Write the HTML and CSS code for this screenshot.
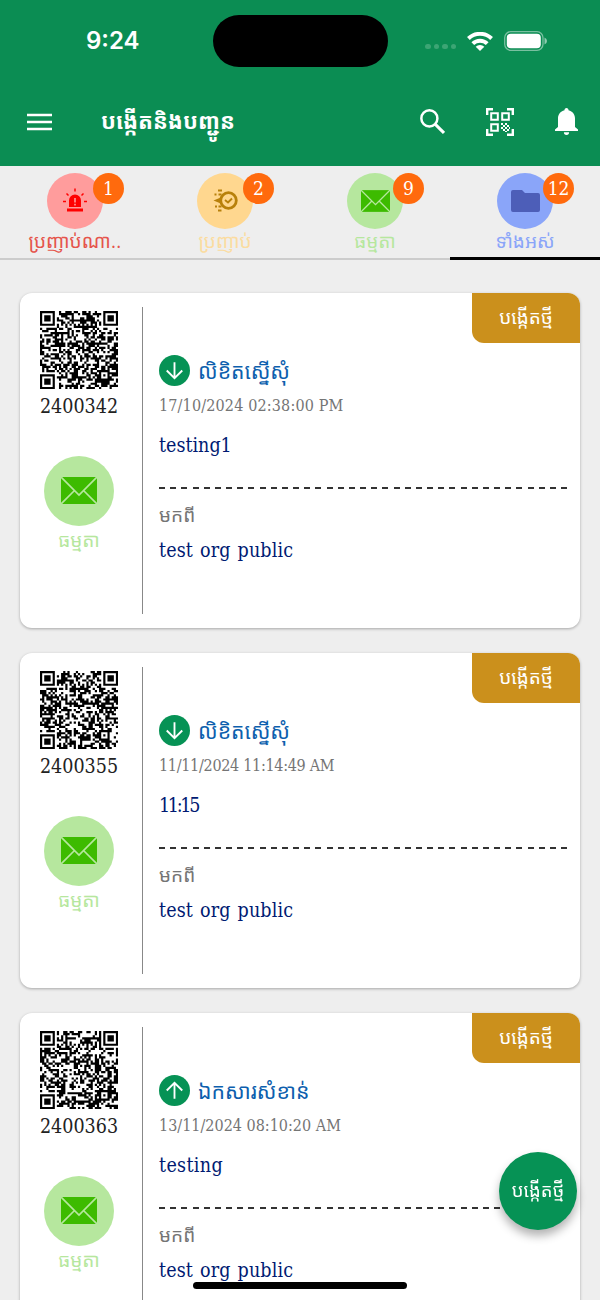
FILE: index.html
```html
<!DOCTYPE html>
<html lang="km">
<head>
    <meta charset="UTF-8">
    <meta name="viewport" content="width=device-width, initial-scale=1.0">
    <title>បង្កើតនិងបញ្ជូន</title>
    <link rel="stylesheet" href="styles.css">
</head>
<body>
    <svg class="sprite">
        <symbol id="mail" viewBox="0 0 36 27">
            <path fill="#3dbb00" d="M0 0h36v27H0z"/>
            <path fill="none" stroke="#b6e79e" stroke-width="1.7" d="M0 0l18 18L36 0M0 27l13.5-13.5M36 27L22.5 13.5"/>
        </symbol>
        <symbol id="down" viewBox="0 0 30 30">
            <circle cx="15" cy="15" r="15" fill="#069255"/>
            <path fill="none" stroke="#fff" stroke-width="1.8" d="M15 7v15M7.5 15l7.5 7.5 7.5-7.5"/>
        </symbol>
        <symbol id="up" viewBox="0 0 30 30">
            <circle cx="15" cy="15" r="15" fill="#069255"/>
            <path fill="none" stroke="#fff" stroke-width="1.8" d="M15 23V8M7.5 15L15 7.5l7.5 7.5"/>
        </symbol>
    </svg>

    <header class="header">
        <div class="status-bar">
            <div class="time">9:24</div>
            <div class="island"></div>
            <div class="status-icons">
                <div class="dots"><i></i><i></i><i></i><i></i></div>
                <svg class="wifi" viewBox="0 0 26 19">
                    <g fill="none" stroke="#fff" stroke-width="3.9">
                        <path d="M1.4 6.5a16.6 16.6 0 0 1 23.2 0"/>
                        <path d="M5.8 11.7a10.2 10.2 0 0 1 14.4 0"/>
                    </g>
                    <path fill="#fff" d="M13 19l-4.3-4.2a6.2 6.2 0 0 1 8.6 0z"/>
                </svg>
                <svg class="battery" viewBox="0 0 43 20">
                    <rect x=".7" y=".7" width="38.3" height="18.6" rx="6" fill="none" stroke="#fff" stroke-opacity=".45" stroke-width="1.3"/>
                    <rect x="2.8" y="2.8" width="34" height="14.4" rx="4" fill="#fff"/>
                    <path d="M40.5 6.5q2.5 1 2.5 3.5t-2.5 3.5z" fill="#fff" fill-opacity=".55"/>
                </svg>
            </div>
        </div>
        <div class="app-bar">
            <svg class="menu" viewBox="0 0 25 18"><path stroke="#fff" stroke-width="2.6" d="M0 2h25M0 9h25M0 16h25"/></svg>
            <h1 class="title">បង្កើតនិងបញ្ជូន</h1>
            <svg class="search" viewBox="0 0 24 24" fill="none" stroke="#fff">
                <circle cx="9" cy="9" r="7.7" stroke-width="2.4"/>
                <path d="M14.5 14.5l8.5 8.5" stroke-width="2.9"/>
            </svg>
            <svg class="scan" viewBox="0 0 28 28">
                <g fill="none" stroke="#fff" stroke-width="2.4">
                    <path d="M1.2 7V1.2H7M21 1.2h5.8V7M26.8 21v5.8H21M7 26.8H1.2V21"/>
                    <path stroke-width="2" d="M5.2 5.2h6.6v6.6H5.2zM16.2 5.2h6.6v6.6h-6.6zM5.2 16.2h6.6v6.6H5.2z"/>
                </g>
                <path fill="#fff" d="M15 15h2v2h-2zM19 15h2v2h-2zM17 17h2v2h-2zM21 17h2v2h-2zM15 19h2v2h-2zM19 19h2v2h-2zM17 21h2v2h-2zM21 21h2v2h-2zM19 23h2v1h-2zM23 19h1v2h-1z"/>
            </svg>
            <svg class="bell" viewBox="0 0 23 27">
                <path fill="#fff" d="M11.5 0c1.3 0 2 1 2 2.2 4.2 1 6.5 4.3 6.5 8.3V19l3 2.6V23H0v-1.4L3 19v-8.5c0-4 2.3-7.3 6.5-8.3 0-1.2.7-2.2 2-2.2zM8.9 24.3h5.2a2.6 2.6 0 0 1-5.2 0z"/>
            </svg>
        </div>
    </header>

    <nav class="tabs">
        <div class="tab urgent">
            <div class="tab-icon">
                <svg width="26" height="26" viewBox="0 0 26 26">
                    <path fill="#f00" d="M7 19v-6.5a6 6 0 0 1 12 0V19zM5 20.5h16v3H5z"/>
                    <path fill="none" stroke="#f00" stroke-width="1.5" d="M1 13.5h3M22 13.5h3M4.5 5.5l2 2M21.5 5.5l-2 2M13 .5v3"/>
                    <path stroke="#ff9c9c" stroke-width="1.6" d="M13 10v4.5M13 15.8v1.6"/>
                </svg>
                <span class="count">1</span>
            </div>
            <div class="tab-label">ប្រញាប់ណា..</div>
        </div>
        <div class="tab fast">
            <div class="tab-icon">
                <svg width="26" height="26" viewBox="0 0 26 26">
                    <circle cx="16.5" cy="12.5" r="7.8" fill="none" stroke="#b8800a" stroke-width="2.8"/>
                    <path fill="none" stroke="#b8800a" stroke-width="1.9" d="M13 12l3 2.5 4-4M6 2.5h4M2.5 6.5h2M6.5 6.5h3M3 18.5h2M6.5 18.5h3M6 22.5h3.5"/>
                    <path fill="#b8800a" d="M1.5 12.5L10 9v7z"/>
                </svg>
                <span class="count">2</span>
            </div>
            <div class="tab-label">ប្រញាប់</div>
        </div>
        <div class="tab normal">
            <div class="tab-icon">
                <svg width="29" height="22"><use href="#mail"/></svg>
                <span class="count">9</span>
            </div>
            <div class="tab-label">ធម្មតា</div>
        </div>
        <div class="tab all active">
            <div class="tab-icon">
                <svg width="29" height="22" viewBox="0 0 29 22">
                    <path fill="#4d5eb8" d="M2 0h9l3 3h13q2 0 2 2v15q0 2-2 2H2q-2 0-2-2V2q0-2 2-2z"/>
                </svg>
                <span class="count">12</span>
            </div>
            <div class="tab-label">ទាំងអស់</div>
        </div>
    </nav>

    <main class="list">
        <article class="card">
            <div class="side">
                <svg class="qr" data-code="2400342" viewBox="0 0 37 37"></svg>
                <div class="number">2400342</div>
                <div class="mail-icon"><svg width="36" height="27"><use href="#mail"/></svg></div>
                <div class="kind">ធម្មតា</div>
            </div>
            <div class="info">
                <div class="doc-type"><svg width="31" height="31"><use href="#down"/></svg><span>លិខិតស្នើសុំ</span></div>
                <div class="date">17/10/2024 02:38:00 PM</div>
                <div class="subject">testing1</div>
                <div class="dashes"></div>
                <div class="from">មកពី</div>
                <div class="org">test org public</div>
            </div>
            <div class="state">បង្កើតថ្មី</div>
        </article>
        <article class="card">
            <div class="side">
                <svg class="qr" data-code="2400355" viewBox="0 0 37 37"></svg>
                <div class="number">2400355</div>
                <div class="mail-icon"><svg width="36" height="27"><use href="#mail"/></svg></div>
                <div class="kind">ធម្មតា</div>
            </div>
            <div class="info">
                <div class="doc-type"><svg width="31" height="31"><use href="#down"/></svg><span>លិខិតស្នើសុំ</span></div>
                <div class="date tight">11/11/2024 11:14:49 AM</div>
                <div class="subject time-subject">11:15</div>
                <div class="dashes"></div>
                <div class="from">មកពី</div>
                <div class="org">test org public</div>
            </div>
            <div class="state">បង្កើតថ្មី</div>
        </article>
        <article class="card">
            <div class="side">
                <svg class="qr" data-code="2400363" viewBox="0 0 37 37"></svg>
                <div class="number">2400363</div>
                <div class="mail-icon"><svg width="36" height="27"><use href="#mail"/></svg></div>
                <div class="kind">ធម្មតា</div>
            </div>
            <div class="info">
                <div class="doc-type"><svg width="31" height="31"><use href="#up"/></svg><span>ឯកសារសំខាន់</span></div>
                <div class="date even">13/11/2024 08:10:20 AM</div>
                <div class="subject wide">testing</div>
                <div class="dashes"></div>
                <div class="from">មកពី</div>
                <div class="org">test org public</div>
            </div>
            <div class="state">បង្កើតថ្មី</div>
        </article>
    </main>

    <button class="fab">បង្កើតថ្មី</button>
    <div class="home-bar"></div>

    <script src="script.js"></script>
</body>
</html>
```
FILE: styles.css
```css
body {
    margin: 0;
    height: 1300px;
    overflow: hidden;
    background: #eeeeee;
    font-family: "Roboto Slab", "DejaVu Serif Condensed", "DejaVu Serif", "Noto Sans Khmer", serif;
    font-stretch: condensed;
}
.sprite {
    display: none;
}
svg {
    display: block;
    flex: none;
}

/* header */
.header {
    height: 166px;
    background: #0b8d53;
    color: #fff;
}
.status-bar {
    display: flex;
    align-items: center;
    height: 75px;
    padding-top: 7px;
    margin-bottom: -8px;
    box-sizing: border-box;
}
.time {
    width: 127px;
    padding-left: 86px;
    font: 600 24px/30px Inter, sans-serif;
    font-stretch: normal;
}
.island {
    width: 175px;
    height: 52px;
    border-radius: 26px;
    background: #000;
}
.status-icons {
    display: flex;
    align-items: center;
    padding-left: 37px;
}
.dots {
    display: flex;
    gap: 3px;
    margin: 11px 11px 0 0;
}
.dots i {
    width: 5.5px;
    height: 5.5px;
    border-radius: 50%;
    background: #3ca574;
}
.wifi {
    width: 26px;
    height: 19px;
    margin-right: 11px;
}
.battery {
    width: 43px;
    height: 20px;
}
.app-bar {
    display: flex;
    align-items: center;
    height: 109px;
    padding: 0 22px 0 27px;
    box-sizing: border-box;
}
.menu {
    width: 25px;
    height: 18px;
    margin-right: 49px;
}
.title {
    flex: 1;
    margin: 0;
    padding-bottom: 2px;
    font-size: 22px;
    font-weight: 700;
    line-height: 40px;
    white-space: nowrap;
}
.search {
    width: 25px;
    height: 25px;
    margin: 0 41px 0 0;
}
.scan {
    width: 28px;
    height: 28px;
    margin-right: 41px;
}
.bell {
    width: 23px;
    height: 27px;
}

/* tabs */
.tabs {
    display: flex;
    height: 94px;
}
.tab {
    flex: 1;
    display: flex;
    flex-direction: column;
    align-items: center;
    box-sizing: border-box;
    padding-top: 7px;
    border-bottom: 2px solid #cccccc;
}
.tab.active {
    border-bottom: 3px solid #000;
}
.tab-icon {
    position: relative;
    display: flex;
    align-items: center;
    justify-content: center;
    width: 56px;
    height: 56px;
    border-radius: 50%;
}
.count {
    position: absolute;
    left: 46px;
    top: 0;
    width: 31px;
    height: 31px;
    border-radius: 50%;
    background: #ff6a0d;
    color: #fff;
    font-size: 19px;
    line-height: 31px;
    text-align: center;
}
.tab-label {
    font-size: 19px;
    line-height: 24px;
    height: 26px;
    white-space: nowrap;
}
.urgent .tab-icon { background: #ff9c9c; }
.urgent .tab-label { color: #e5544b; }
.fast .tab-icon { background: #ffd78f; }
.fast .tab-label { color: #fbdca0; }
.normal .tab-icon { background: #b6e79e; }
.normal .tab-label { color: #b6e79e; }
.all .tab-icon { background: #8aa5f9; }
.all .tab-label { color: #8aa5f9; }

/* cards */
.list {
    display: grid;
    gap: 25px;
    padding: 33px 20px 0;
}
.card {
    position: relative;
    display: flex;
    box-sizing: border-box;
    height: 335px;
    padding: 14px 13px 14px 0;
    border-radius: 12px;
    background: #fff;
    box-shadow: 0 1px 3px rgba(0, 0, 0, .3);
}
.side {
    display: flex;
    flex-direction: column;
    align-items: center;
    box-sizing: border-box;
    width: 123px;
    padding: 4px 4px 0 0;
    border-right: 1.5px solid #888;
}
.qr {
    width: 78px;
    height: 78px;
}
.number {
    margin-top: 4px;
    font-size: 19.5px;
    line-height: 28px;
    color: #222;
}
.mail-icon {
    display: flex;
    align-items: center;
    justify-content: center;
    width: 70px;
    height: 70px;
    margin-top: 34.5px;
    border-radius: 50%;
    background: #b6e79e;
}
.kind {
    font-size: 19px;
    line-height: 28px;
    color: #b6e79e;
}
.info {
    flex: 1;
    padding: 48px 0 0 16px;
    white-space: nowrap;
}
.doc-type {
    display: flex;
    align-items: center;
    gap: 8px;
    height: 31px;
    font-size: 21.2px;
    color: #0d5fae;
}
.date {
    margin-top: 9px;
    font-size: 16px;
    line-height: 22px;
    letter-spacing: .15px;
    color: #757575;
}
.date.tight {
    letter-spacing: -.3px;
}
.date.even {
    letter-spacing: 0;
}
.subject,
.org {
    font-size: 19.5px;
    line-height: 28px;
    color: #001a72;
}
.subject {
    margin-top: 15px;
}
.subject.time-subject {
    letter-spacing: -2.3px;
}
.subject.wide {
    letter-spacing: .35px;
}
.dashes {
    height: 2px;
    margin-top: 27px;
    background: repeating-linear-gradient(90deg, #333 0 6px, transparent 6px 11.17px);
}
.from {
    margin-top: 12px;
    font-size: 19px;
    line-height: 28px;
    color: #757575;
}
.org {
    margin-top: 8px;
    letter-spacing: .15px;
    word-spacing: 1.2px;
}
.state {
    position: absolute;
    top: 0;
    right: 0;
    width: 108px;
    height: 50px;
    border-radius: 0 12px 0 12px;
    background: #cb901c;
    color: #fff;
    font-size: 19px;
    line-height: 48px;
    text-align: center;
}

/* floating button and home indicator */
.fab {
    position: fixed;
    left: 499px;
    top: 1152px;
    width: 78px;
    height: 78px;
    padding: 0 0 3px;
    border: none;
    border-radius: 50%;
    background: #069255;
    color: #fff;
    font-family: inherit;
    font-size: 18.5px;
    white-space: nowrap;
    box-shadow: 0 6px 10px rgba(0, 0, 0, .3);
}
.home-bar {
    position: fixed;
    left: 193px;
    top: 1282px;
    width: 214px;
    height: 7px;
    border-radius: 4px;
    background: #000;
}
```
FILE: script.js
```js
// Draws a 37x37 code with finder, timing and alignment marks
function drawCode(svg) {
    const size = 37;
    let seed = Number(svg.dataset.code);
    let path = '';

    function next() {
        seed ^= seed << 13;
        seed ^= seed >>> 17;
        seed ^= seed << 5;
        return (seed >>> 0) / 4294967296;
    }

    function ring(x, y, cx, cy) {
        return Math.max(Math.abs(x - cx), Math.abs(y - cy));
    }

    for (let y = 0; y < size; y++) {
        for (let x = 0; x < size; x++) {
            let dark = next() < 0.53;
            if (x === 6 || y === 6) dark = (x + y) % 2 === 0;
            [[3, 3], [33, 3], [3, 33]].forEach(([cx, cy]) => {
                const r = ring(x, y, cx, cy);
                if (r <= 4) dark = r <= 1 || r === 3;
            });
            const a = ring(x, y, 30, 30);
            if (a <= 2) dark = a !== 1;
            if (dark) path += `M${x} ${y}h1.04v1.04h-1.04z`;
        }
    }
    svg.innerHTML = `<path d="${path}"/>`;
}

document.querySelectorAll('.qr').forEach(drawCode);
```
